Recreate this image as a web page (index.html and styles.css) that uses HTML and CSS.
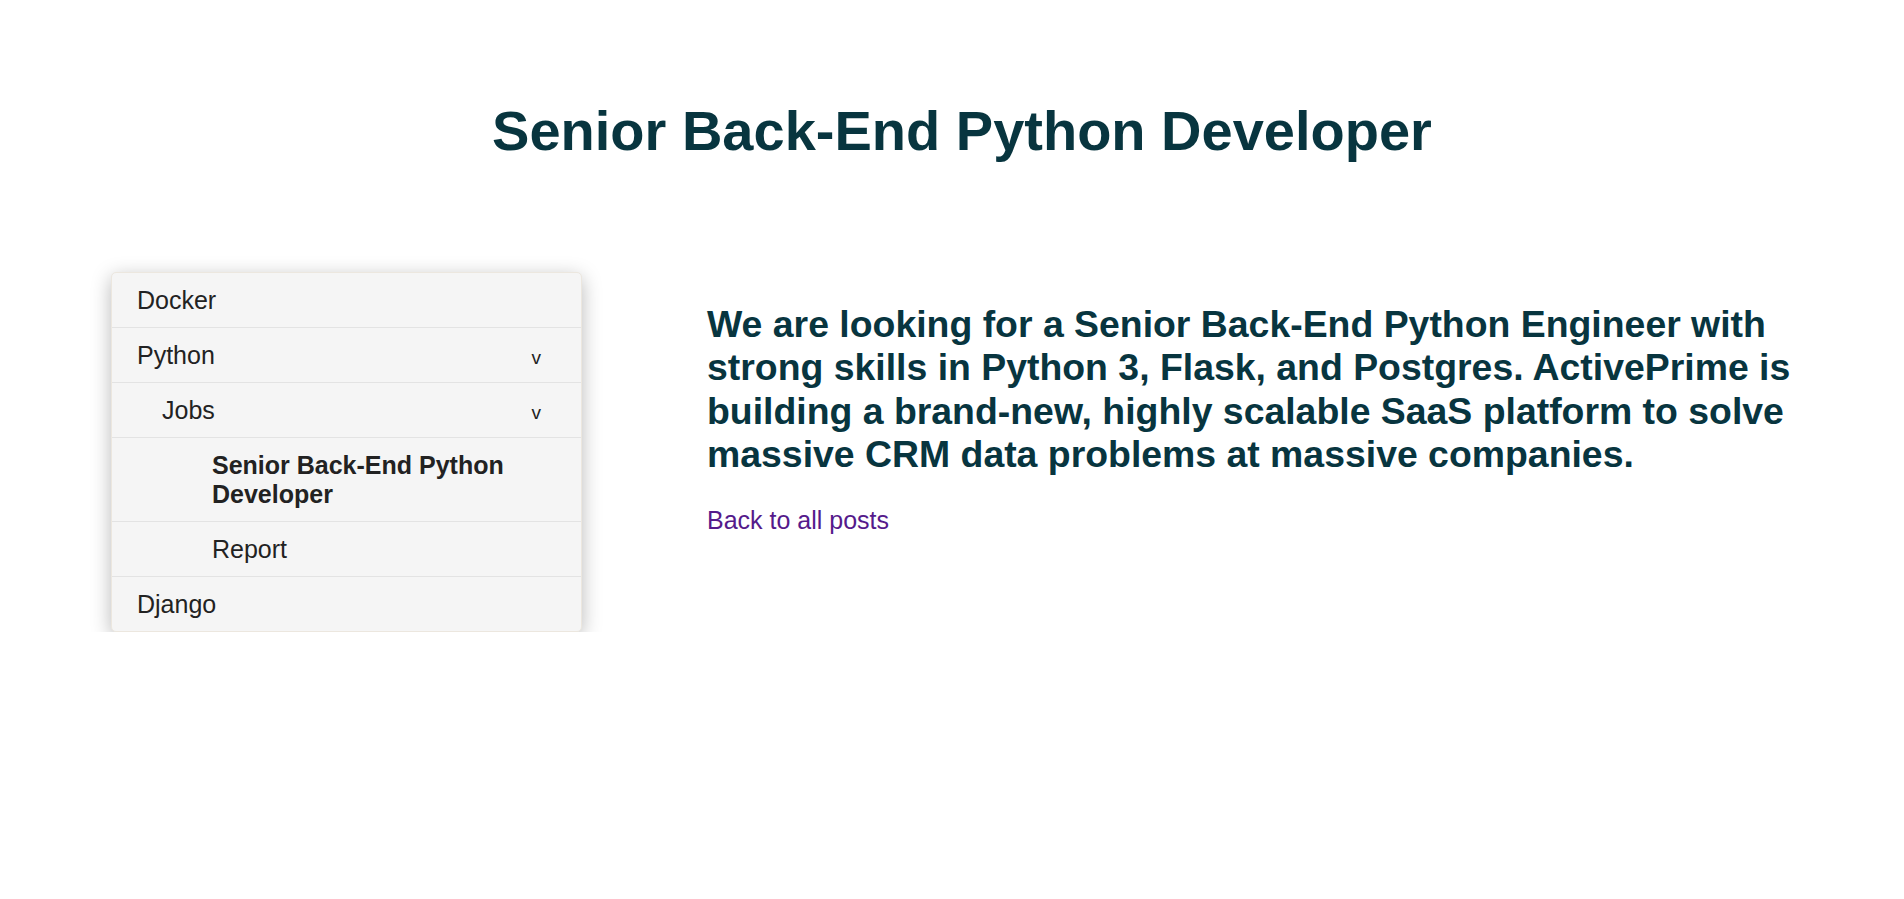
FILE: index.html
```html
<!DOCTYPE html>
<html lang="en">
<head>
<meta charset="utf-8">
<title>Senior Back-End Python Developer</title>
<link rel="stylesheet" href="styles.css">
</head>
<body>
<header class="page-header">
  <h1 class="page-title">Senior Back-End Python Developer</h1>
</header>
<main class="layout">
  <nav class="sidenav">
    <ul class="nav-list">
      <li class="nav-item"><a class="nav-link" href="#">Docker</a></li>
      <li class="nav-item"><a class="nav-link" href="#">Python</a><span class="chevron">v</span></li>
      <li class="nav-item level-2"><a class="nav-link" href="#">Jobs</a><span class="chevron">v</span></li>
      <li class="nav-item level-3 active"><a class="nav-link" href="#">Senior Back-End Python Developer</a></li>
      <li class="nav-item level-3"><a class="nav-link" href="#">Report</a></li>
      <li class="nav-item"><a class="nav-link" href="#">Django</a></li>
    </ul>
  </nav>
  <article class="content">
    <p class="lead">We are looking for a Senior Back-End Python Engineer with strong skills in Python 3, Flask, and Postgres. ActivePrime is building a brand-new, highly scalable SaaS platform to solve massive CRM data problems at massive companies.</p>
    <a class="back-link" href="#">Back to all posts</a>
  </article>
</main>
</body>
</html>
```
FILE: styles.css
```css
html, body {
  margin: 0;
  padding: 0;
  background: #ffffff;
}

body {
  font-family: "Liberation Sans", Arial, sans-serif;
  color: #222222;
}

.page-header {
  padding-top: 99px;
  padding-left: 20px;
  text-align: center;
}

.page-title {
  margin: 0;
  font-size: 56px;
  line-height: 64px;
  font-weight: 700;
  color: #08353f;
}

.layout {
  display: flex;
  align-items: flex-start;
  padding: 109px 0 0 111px;
}

.sidenav {
  flex: 0 0 471px;
  width: 471px;
  background: #f5f5f5;
  border: 1px solid #ece7df;
  border-radius: 5px;
  box-sizing: border-box;
  box-shadow: 0 5px 20px rgba(0, 0, 0, 0.28);
  overflow: hidden;
}

.nav-list {
  list-style: none;
  margin: 0;
  padding: 0;
}

.nav-item {
  display: flex;
  align-items: baseline;
  justify-content: space-between;
  padding: 13px 40px 12px 25px;
  border-bottom: 1px solid #e3e3e3;
  font-size: 25px;
  line-height: 29px;
}

.nav-item:last-child {
  border-bottom: none;
}

.nav-item.level-2 {
  padding-left: 50px;
}

.nav-item.level-3 {
  padding-left: 100px;
}

.nav-link {
  color: #222222;
  text-decoration: none;
}

.nav-item.active .nav-link {
  font-weight: 700;
}

.chevron {
  font-size: 19px;
  line-height: 19px;
  color: #222222;
}

.content {
  flex: 0 0 1120px;
  margin-left: 125px;
  padding-top: 31px;
}

.lead {
  margin: 0 0 29px 0;
  font-size: 37.4px;
  line-height: 43.4px;
  font-weight: 700;
  color: #08353f;
}

.back-link {
  font-size: 25px;
  line-height: 29px;
  color: #551a8b;
  text-decoration: none;
}
```
